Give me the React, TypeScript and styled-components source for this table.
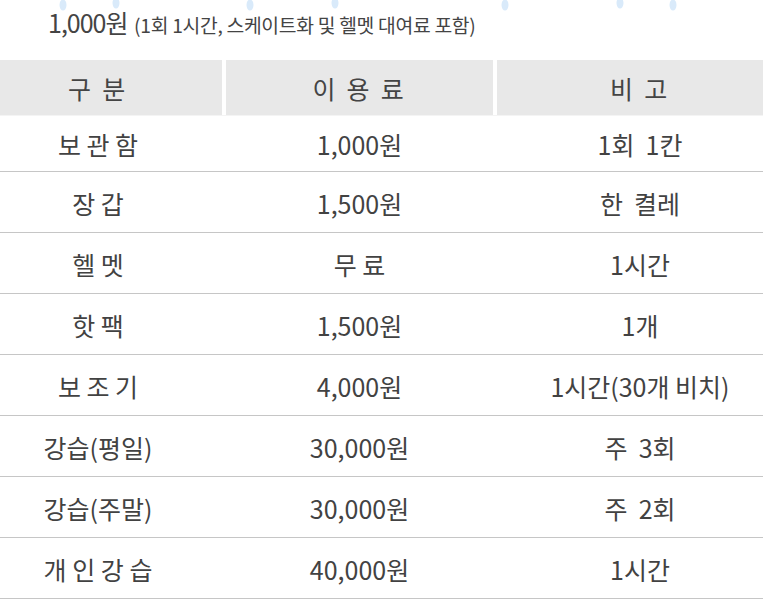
import styled, { createGlobalStyle } from 'styled-components'

const GlobalStyle = createGlobalStyle`
  html, body {
    margin: 0;
    padding: 0;
    background: #fff;
    overflow: hidden;
  }
  body {
    font-family: "Noto Sans CJK KR", "Noto Sans", sans-serif;
    color: #444;
  }
`

const rows = [
    { name: "보 관 함", fee: "1,000원", note: "1회  1칸" },
    { name: "장 갑", fee: "1,500원", note: "한  켤레" },
    { name: "헬 멧", fee: "무 료", note: "1시간" },
    { name: "핫 팩", fee: "1,500원", note: "1개" },
    { name: "보 조 기", fee: "4,000원", note: "1시간(30개 비치)" },
    { name: "강습(평일)", fee: "30,000원", note: "주  3회" },
    { name: "강습(주말)", fee: "30,000원", note: "주  2회" },
    { name: "개 인 강 습", fee: "40,000원", note: "1시간" },
]

const dots = [63, 116, 250, 335, 505, 620, 673]

const App = () => {
    return (
        <Page>
            <GlobalStyle />
            <Snow width="763" height="12" viewBox="0 0 763 12">
                {dots.map((x, i) => (
                    <ellipse key={i} cx={x} cy={i % 2 ? 3 : 5} rx="3.5" ry="5.5" fill="#d9eafa" />
                ))}
            </Snow>
            <Price>
                1,000원 <small>(1회 1시간, 스케이트화 및 헬멧 대여료 포함)</small>
            </Price>
            <Table>
                <HeadRow>
                    <HeadCell>구 분</HeadCell>
                    <HeadCell>이 용 료</HeadCell>
                    <HeadCell>비 고</HeadCell>
                </HeadRow>
                {rows.map((r, i) => (
                    <Row key={i} $first={i === 0}>
                        <Cell>{r.name}</Cell>
                        <Cell>{r.fee}</Cell>
                        <Cell>{r.note}</Cell>
                    </Row>
                ))}
            </Table>
        </Page>
    )
}

export default App

const Page = styled.div`
  width: 763px;
  height: 608px;
  overflow: hidden;
`

const Snow = styled.svg`
  display: block;
  height: 12px;
  margin-bottom: -12px;
`

const Price = styled.div`
  height: 50px;
  padding-left: 48px;
  box-sizing: border-box;
  padding-top: 4px;
  font-size: 25px;
  letter-spacing: -1px;
  color: #444;
  line-height: 36px;

  small {
    margin-left: 2px;
    font-size: 19.3px;
    letter-spacing: -0.3px;
  }
`

const Table = styled.div`
  width: 809px;
  margin-left: -26px;
  margin-top: 10px;
`

const cols = `248px 267px 286px`

const HeadRow = styled.div`
  display: grid;
  grid-template-columns: ${cols};
  column-gap: 4px;
  height: 55px;
  border-bottom: 1px solid #f4f4f4;
`

const HeadCell = styled.div`
  background: #e8e8e8;
  display: flex;
  align-items: center;
  justify-content: center;
  font-size: 25px;
  letter-spacing: 2.8px;
  color: #444;
`

const Row = styled.div<{ $first?: boolean }>`
  display: grid;
  grid-template-columns: ${cols};
  column-gap: 4px;
  height: ${p => (p.$first ? 55 : 60)}px;
  border-bottom: 1.3px solid #c6c6c6;
`

const Cell = styled.div`
  display: flex;
  align-items: center;
  justify-content: center;
  padding-top: 1px;
  font-size: 25px;
  letter-spacing: 0;
  white-space: pre;
  color: #424242;
`
